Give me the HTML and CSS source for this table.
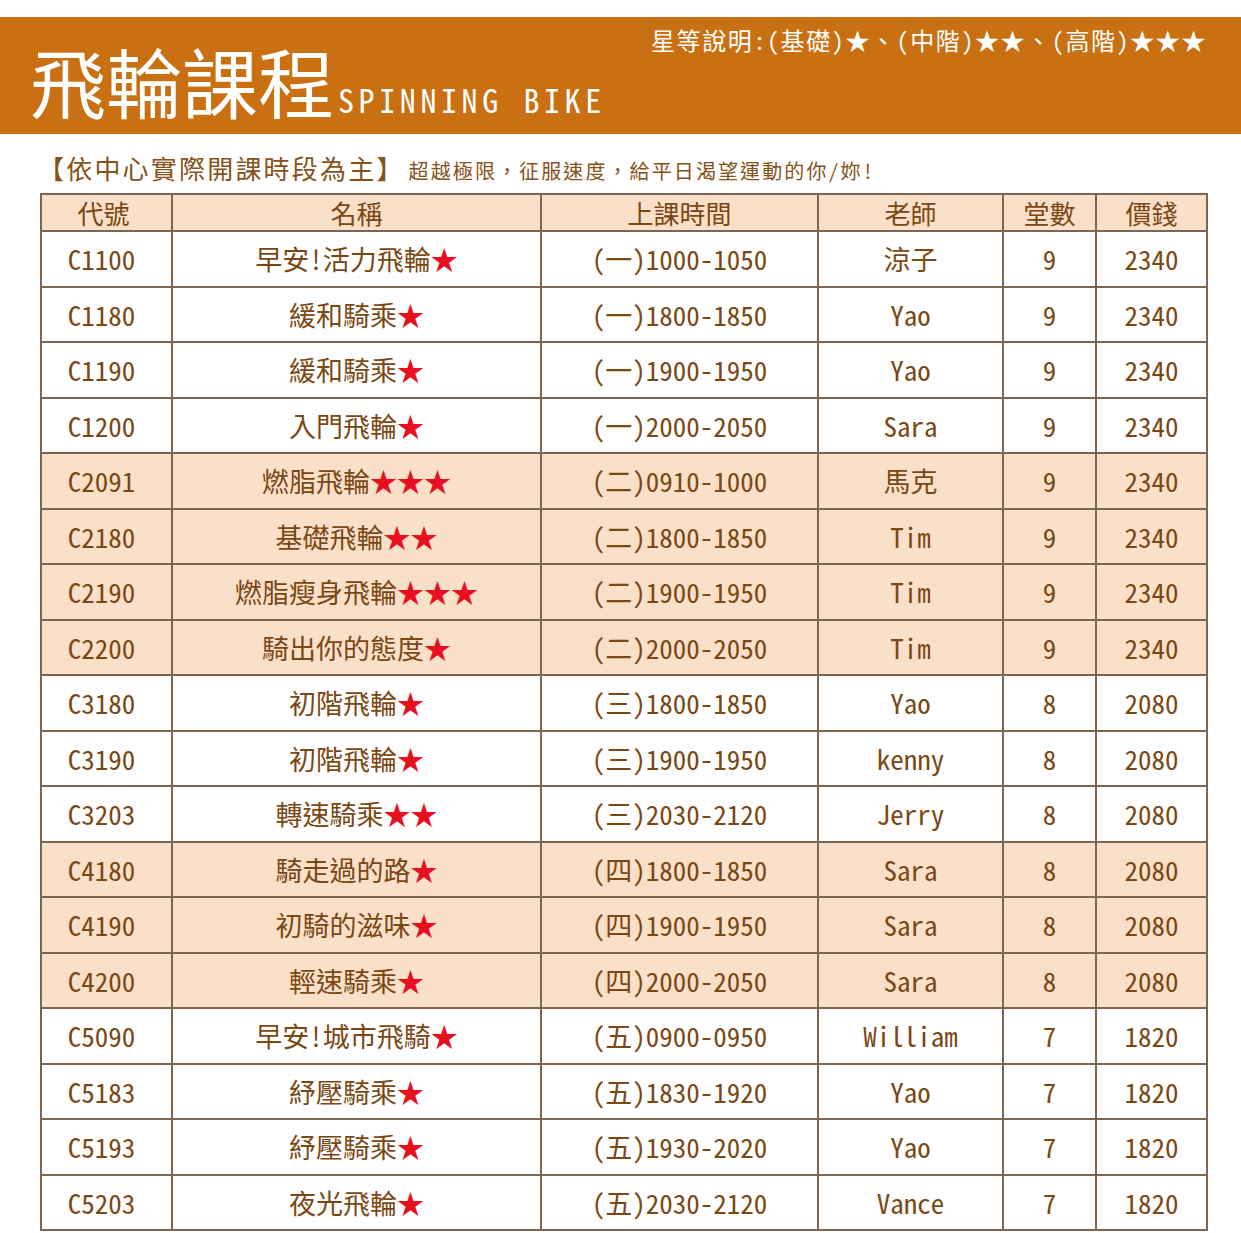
FILE: index.html
```html
<!DOCTYPE html>
<html lang="zh-Hant">
<head>
<meta charset="utf-8">
<title>飛輪課程</title>
<link rel="stylesheet" href="styles.css">
</head>
<body>
<header class="band">
  <div class="title">
    <span class="title-zh">飛輪課程</span><span class="title-en">SPINNING BIKE</span>
  </div>
  <div class="legend">星等說明:(基礎)★、(中階)★★、(高階)★★★</div>
</header>
<p class="sub"><span class="sub-main">【依中心實際開課時段為主】</span><span class="sub-note">超越極限，征服速度，給平日渴望運動的你/妳!</span></p>
<table class="grid">
  <colgroup>
    <col class="c1"><col class="c2"><col class="c3"><col class="c4"><col class="c5"><col class="c6">
  </colgroup>
  <thead>
    <tr><th>代號</th><th>名稱</th><th>上課時間</th><th>老師</th><th>堂數</th><th>價錢</th></tr>
  </thead>
  <tbody>
    <tr><td>C1100</td><td>早安!活力飛輪<b>★</b></td><td>(一)1000-1050</td><td>涼子</td><td>9</td><td>2340</td></tr>
    <tr><td>C1180</td><td>緩和騎乘<b>★</b></td><td>(一)1800-1850</td><td>Yao</td><td>9</td><td>2340</td></tr>
    <tr><td>C1190</td><td>緩和騎乘<b>★</b></td><td>(一)1900-1950</td><td>Yao</td><td>9</td><td>2340</td></tr>
    <tr><td>C1200</td><td>入門飛輪<b>★</b></td><td>(一)2000-2050</td><td>Sara</td><td>9</td><td>2340</td></tr>
    <tr class="hl"><td>C2091</td><td>燃脂飛輪<b>★★★</b></td><td>(二)0910-1000</td><td>馬克</td><td>9</td><td>2340</td></tr>
    <tr class="hl"><td>C2180</td><td>基礎飛輪<b>★★</b></td><td>(二)1800-1850</td><td>Tim</td><td>9</td><td>2340</td></tr>
    <tr class="hl"><td>C2190</td><td>燃脂瘦身飛輪<b>★★★</b></td><td>(二)1900-1950</td><td>Tim</td><td>9</td><td>2340</td></tr>
    <tr class="hl"><td>C2200</td><td>騎出你的態度<b>★</b></td><td>(二)2000-2050</td><td>Tim</td><td>9</td><td>2340</td></tr>
    <tr><td>C3180</td><td>初階飛輪<b>★</b></td><td>(三)1800-1850</td><td>Yao</td><td>8</td><td>2080</td></tr>
    <tr><td>C3190</td><td>初階飛輪<b>★</b></td><td>(三)1900-1950</td><td>kenny</td><td>8</td><td>2080</td></tr>
    <tr><td>C3203</td><td>轉速騎乘<b>★★</b></td><td>(三)2030-2120</td><td>Jerry</td><td>8</td><td>2080</td></tr>
    <tr class="hl"><td>C4180</td><td>騎走過的路<b>★</b></td><td>(四)1800-1850</td><td>Sara</td><td>8</td><td>2080</td></tr>
    <tr class="hl"><td>C4190</td><td>初騎的滋味<b>★</b></td><td>(四)1900-1950</td><td>Sara</td><td>8</td><td>2080</td></tr>
    <tr class="hl"><td>C4200</td><td>輕速騎乘<b>★</b></td><td>(四)2000-2050</td><td>Sara</td><td>8</td><td>2080</td></tr>
    <tr><td>C5090</td><td>早安!城市飛騎<b>★</b></td><td>(五)0900-0950</td><td>William</td><td>7</td><td>1820</td></tr>
    <tr><td>C5183</td><td>紓壓騎乘<b>★</b></td><td>(五)1830-1920</td><td>Yao</td><td>7</td><td>1820</td></tr>
    <tr><td>C5193</td><td>紓壓騎乘<b>★</b></td><td>(五)1930-2020</td><td>Yao</td><td>7</td><td>1820</td></tr>
    <tr><td>C5203</td><td>夜光飛輪<b>★</b></td><td>(五)2030-2120</td><td>Vance</td><td>7</td><td>1820</td></tr>
  </tbody>
</table>
</body>
</html>
```
FILE: styles.css
```css
html, body {
  margin: 0;
  padding: 0;
  background: #ffffff;
}
body {
  font-family: "Noto Sans Mono CJK TC", "Noto Sans CJK TC", sans-serif;
  color: #7b4814;
  padding-top: 17px;
}
.band {
  background: #c97012;
  height: 117px;
  display: flex;
  justify-content: space-between;
  box-sizing: border-box;
  padding: 0 34px 0 30px;
  color: #ffffff;
}
.title {
  align-self: flex-end;
  display: flex;
  align-items: baseline;
  line-height: 1;
  padding-bottom: 16px;
}
.title-zh {
  font-size: 76px;
  letter-spacing: 0;
}
.title-en {
  font-size: 32px;
  letter-spacing: 4.6px;
  margin-left: 4px;
}
.legend {
  align-self: flex-start;
  font-size: 24px;
  line-height: 1;
  padding-top: 11px;
  letter-spacing: 1.6px;
}
.sub {
  margin: 0;
  padding: 21px 0 0 38px;
  height: 59px;
  box-sizing: border-box;
  display: flex;
  align-items: baseline;
  line-height: 1;
  color: #86521a;
}
.sub-main {
  font-size: 26px;
  letter-spacing: 2.2px;
}
.sub-note {
  font-size: 20px;
  letter-spacing: 2.1px;
  margin-left: 4px;
}
.grid {
  margin: 0 0 0 40px;
  width: 1166px;
  border-collapse: collapse;
  table-layout: fixed;
  border: 2px solid #7a6651;
}
.c1 { width: 131px; }
.c2 { width: 369px; }
.c3 { width: 277px; }
.c4 { width: 185px; }
.c5 { width: 93px; }
.c6 { width: 111px; }
.grid th, .grid td {
  border: 2px solid #7a6651;
  text-align: center;
  padding: 0;
  font-weight: normal;
  line-height: 1;
  white-space: nowrap;
}
.grid td:first-child {
  padding-right: 10px;
}
.grid th:first-child {
  padding-right: 6px;
}
.grid thead tr {
  height: 37px;
  background: #fadfc9;
}
.grid th {
  font-family: "Noto Sans CJK TC", sans-serif;
  font-size: 26px;
}
.grid tbody tr {
  height: 55.5px;
}
.grid td {
  font-size: 27px;
}
.grid tr.hl {
  background: #fadfc9;
}
.grid b {
  font-weight: normal;
  color: #e8101e;
  font-family: "Noto Sans CJK TC", sans-serif;
}
```
